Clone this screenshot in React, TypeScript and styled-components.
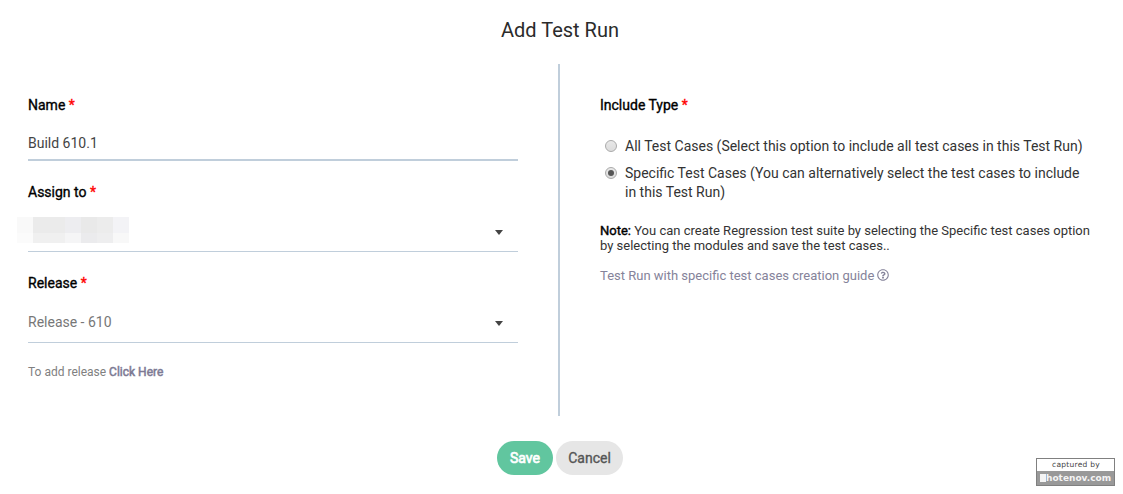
import React from 'react';
import styled, { createGlobalStyle } from 'styled-components';
import { FaRegQuestionCircle } from 'react-icons/fa';

const GlobalStyle = createGlobalStyle`
  * { box-sizing: border-box; }
  body {
    margin: 0;
    background: #fff;
    color: #333;
    font-family: Roboto, "Liberation Sans", sans-serif;
    font-size: 14px;
  }
`;

const Page = styled.main`
  position: relative;
  height: 494px;
  width: 1123px;
  overflow: hidden;
  display: flex;
  flex-direction: column;
`;
const Title = styled.h1`
  margin: 0;
  height: 64px;
  padding: 18px 0 0 501px;
  font-size: 20px;
  line-height: 24px;
  font-weight: 400;
  color: #2b2b2b;
  white-space: nowrap;
`;
const Columns = styled.div`
  display: flex;
  height: 352px;
`;
const LeftColumn = styled.section`
  width: 560px;
  border-right: 2px solid #c0cedb;
  padding: 31px 40px 0 28px;
`;
const RightColumn = styled.section`
  flex: 1;
  padding: 31px 20px 0 40px;
`;
const Label = styled.div`
  height: 20px;
  line-height: 20px;
  font-weight: 400;
  color: #000;
  -webkit-text-stroke: 0.35px currentColor;
  span { color: #f00; }
`;
const Field = styled.div<{ $height: number; $top: number; $thick?: boolean; $muted?: boolean }>`
  display: flex;
  align-items: center;
  justify-content: space-between;
  height: ${p => p.$height}px;
  margin-bottom: 21px;
  padding: ${p => p.$top}px 15px 0 0;
  border-bottom: ${p => (p.$thick ? 2 : 1)}px solid #c0cedb;
  color: ${p => (p.$muted ? '#777' : '#444')};
`;
const Caret = styled.i`
  border: 4.5px solid transparent;
  border-top: 5px solid #444;
  border-bottom: 0;
  margin-top: 2px;
`;
const Redacted = styled.div`
  display: grid;
  grid-template-columns: repeat(7, 16px);
  grid-template-rows: 16px 10px;
  margin: -2px 0 0 -11px;
`;
const Block = styled.span<{ $tone: string }>`
  background: ${p => p.$tone};
`;
const Hint = styled.div`
  font-size: 12px;
  line-height: 16px;
  color: #808080;
  a { color: #7d7a94; -webkit-text-stroke: 0.5px currentColor; }
`;
const Options = styled.div`
  padding: 22px 0 0 5px;
`;
const Option = styled.label`
  display: flex;
  gap: 8px;
  line-height: 19px;
  margin-bottom: 8px;
  white-space: nowrap;
`;
const Radio = styled.span<{ $checked?: boolean }>`
  display: flex;
  align-items: center;
  justify-content: center;
  width: 12px;
  height: 12px;
  margin-top: 3px;
  border: 1px solid #aaa;
  border-radius: 50%;
  background: linear-gradient(#e8e8e8, #dcdcdc);
  &::after {
    content: '';
    width: 6px;
    height: 6px;
    border-radius: 50%;
    background: ${p => (p.$checked ? '#555' : 'transparent')};
  }
`;
const Note = styled.p`
  margin: 21px 0 0;
  font-size: 13px;
  line-height: 15px;
  white-space: nowrap;
  b { color: #000; font-weight: 400; -webkit-text-stroke: 0.4px currentColor; }
`;
const Guide = styled.a`
  display: flex;
  align-items: center;
  gap: 3px;
  margin-top: 15px;
  font-size: 13px;
  line-height: 16px;
  color: #85839a;
  svg { margin-bottom: 2px; }
`;
const Actions = styled.div`
  display: flex;
  gap: 3px;
  padding: 25px 0 0 497px;
`;
const Button = styled.button<{ $primary?: boolean }>`
  width: ${p => (p.$primary ? 56 : 67)}px;
  height: 34px;
  padding: 0 0 1px;
  border: 0;
  border-radius: 17px;
  font: 400 14px Roboto, sans-serif;
  -webkit-text-stroke: ${p => (p.$primary ? 0.7 : 0.35)}px currentColor;
  color: ${p => (p.$primary ? '#fff' : '#555')};
  background: ${p => (p.$primary ? '#61c69f' : '#e6e6e6')};
`;
const Stamp = styled.div`
  position: absolute;
  left: 1036px;
  top: 458px;
  width: 79px;
  height: 28px;
  border: 1px solid #808080;
  font-family: "DejaVu Sans", sans-serif;
  text-align: center;
  white-space: nowrap;
`;
const StampTop = styled.div`
  height: 12px;
  padding-left: 1px;
  font-size: 7.5px;
  letter-spacing: 0.25px;
  line-height: 11px;
  color: #444;
`;
const StampSite = styled.div`
  display: flex;
  align-items: center;
  height: 14px;
  padding-left: 3px;
  background: #999;
  color: #f4f4f4;
  font-size: 9px;
  font-weight: 700;
  &::before {
    content: '';
    width: 6px;
    height: 8px;
    margin-bottom: 1px;
    background: #f4f4f4;
  }
`;

const TONES = [
  '#f9f9f9', '#ebebeb', '#ebebeb', '#ededf0', '#e9e9e9', '#ececec', '#f3f3f6',
  '#fbfbfb', '#f0f0f0', '#f0f0f0', '#f5f5f6', '#ebebed', '#eeeeef', '#f8f8f8',
];

export default function App() {
  return (
    <Page>
      <GlobalStyle />
      <Title>Add Test Run</Title>
      <Columns>
        <LeftColumn>
          <Label>Name <span>*</span></Label>
          <Field $height={46} $top={11} $thick>Build 610.1</Field>
          <Label>Assign to <span>*</span></Label>
          <Field $height={50} $top={9}>
            <Redacted>{TONES.map((tone, i) => <Block key={i} $tone={tone} />)}</Redacted>
            <Caret />
          </Field>
          <Label>Release <span>*</span></Label>
          <Field $height={50} $top={9} $muted>
            Release - 610
            <Caret />
          </Field>
          <Hint>To add release <a>Click Here</a></Hint>
        </LeftColumn>
        <RightColumn>
          <Label>Include Type <span>*</span></Label>
          <Options>
            <Option>
              <Radio />
              <span>All Test Cases (Select this option to include all test cases in this Test Run)</span>
            </Option>
            <Option>
              <Radio $checked />
              <span>Specific Test Cases (You can alternatively select the test cases to include<br />in this Test Run)</span>
            </Option>
          </Options>
          <Note>
            <b>Note:</b> You can create Regression test suite by selecting the Specific test cases option<br />
            by selecting the modules and save the test cases..
          </Note>
          <Guide>Test Run with specific test cases creation guide <FaRegQuestionCircle size={12} /></Guide>
        </RightColumn>
      </Columns>
      <Actions>
        <Button $primary>Save</Button>
        <Button>Cancel</Button>
      </Actions>
      <Stamp>
        <StampTop>captured by</StampTop>
        <StampSite>hotenov.com</StampSite>
      </Stamp>
    </Page>
  );
}
